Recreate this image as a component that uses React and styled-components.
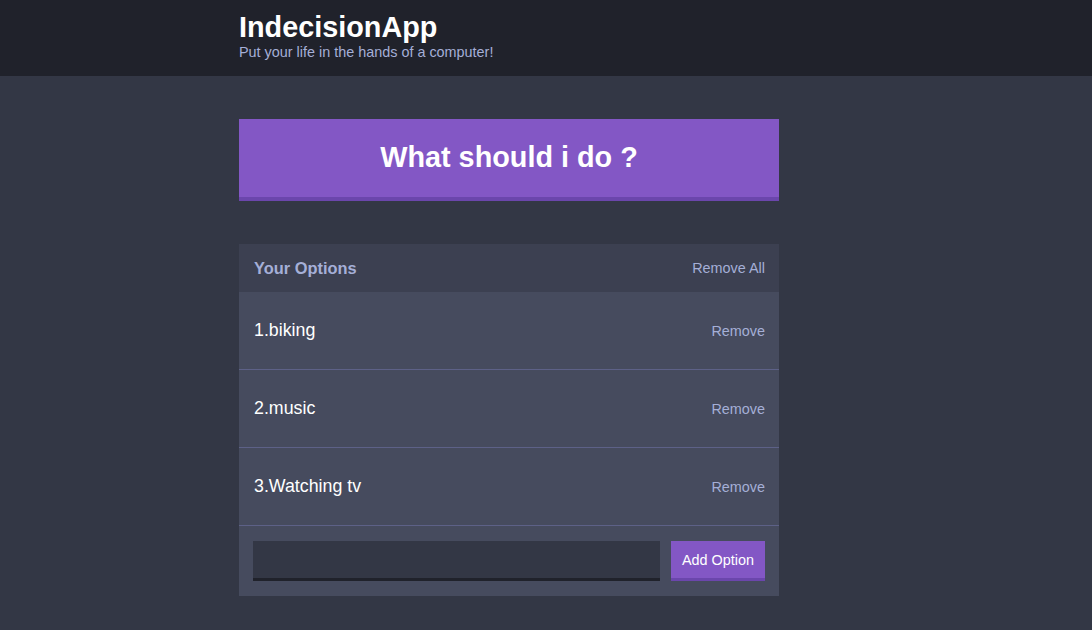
import styled, { createGlobalStyle } from "styled-components";

const options = ["biking", "music", "Watching tv"];

const GlobalStyle = createGlobalStyle`
    html, body {
        margin: 0;
        padding: 0;
        background: #333745;
        font-family: "Liberation Sans", Arial, sans-serif;
    }
    * {
        box-sizing: border-box;
    }
`;

export default function App() {
    return (
        <>
            <GlobalStyle />
            <Header>
                <Container>
                    <Title>IndecisionApp</Title>
                    <Subtitle>Put your life in the hands of a computer!</Subtitle>
                </Container>
            </Header>

            <Container>
                <BigButton>What should i do ?</BigButton>

                <Widget>
                    <WidgetHeader>
                        <WidgetTitle>Your Options</WidgetTitle>
                        <LinkButton>Remove All</LinkButton>
                    </WidgetHeader>

                    {options.map((item, i) => (
                        <Option key={i}>
                            <OptionText>{i + 1}.{item}</OptionText>
                            <LinkButton>Remove</LinkButton>
                        </Option>
                    ))}

                    <AddForm onSubmit={e => e.preventDefault()}>
                        <Input type="text" name="option" />
                        <AddButton type="submit">Add Option</AddButton>
                    </AddForm>
                </Widget>
            </Container>
        </>
    );
}

const Header = styled.header`
    background: #20222b;
    height: 76px;
    padding-top: 10.5px;
`;

const Container = styled.div`
    width: 540px;
    margin-left: 239px;
`;

const Title = styled.h1`
    margin: 0;
    font-size: 28.8px;
    font-weight: bold;
    color: #ffffff;
    line-height: normal;
`;

const Subtitle = styled.h2`
    margin: 0;
    font-size: 14.4px;
    font-weight: normal;
    color: #a5afd7;
    line-height: normal;
`;

const BigButton = styled.button`
    display: flex;
    align-items: center;
    justify-content: center;
    width: 100%;
    height: 82px;
    margin-top: 43px;
    background: #8357c5;
    border: none;
    border-bottom: 4px solid #6b46ac;
    color: #ffffff;
    font-family: inherit;
    font-size: 28.8px;
    font-weight: bold;
    padding: 0 0 2px;
`;

const Widget = styled.div`
    margin-top: 43px;
    background: #464b5e;
`;

const WidgetHeader = styled.div`
    display: flex;
    justify-content: space-between;
    align-items: center;
    height: 48px;
    padding: 0 14px 0 15px;
    background: #3c4051;
`;

const WidgetTitle = styled.h3`
    margin: 0;
    font-size: 16.4px;
    font-weight: bold;
    color: #a5afd7;
`;

const LinkButton = styled.button`
    background: none;
    border: none;
    padding: 0;
    font-family: inherit;
    font-size: 14.4px;
    color: #a5afd7;
`;

const Option = styled.div`
    display: flex;
    justify-content: space-between;
    align-items: center;
    height: 78px;
    padding: 0 14px 0 15px;
    border-bottom: 1px solid #5d6187;
`;

const OptionText = styled.p`
    margin: 0;
    font-size: 17.8px;
    color: #ffffff;
`;

const AddForm = styled.form`
    display: flex;
    align-items: center;
    gap: 11px;
    padding: 15px 14px 15px 14px;
`;

const Input = styled.input`
    flex: 1;
    height: 40px;
    background: #333745;
    border: none;
    border-bottom: 3px solid #20222b;
    color: #ffffff;
    font-family: inherit;
    font-size: 14.4px;
    padding: 0 10px;
    outline: none;
`;

const AddButton = styled.button`
    height: 40px;
    padding: 0 11px;
    background: #8357c5;
    border: none;
    border-bottom: 3px solid #6b46ac;
    color: #ffffff;
    font-family: inherit;
    font-size: 14.4px;
`;
